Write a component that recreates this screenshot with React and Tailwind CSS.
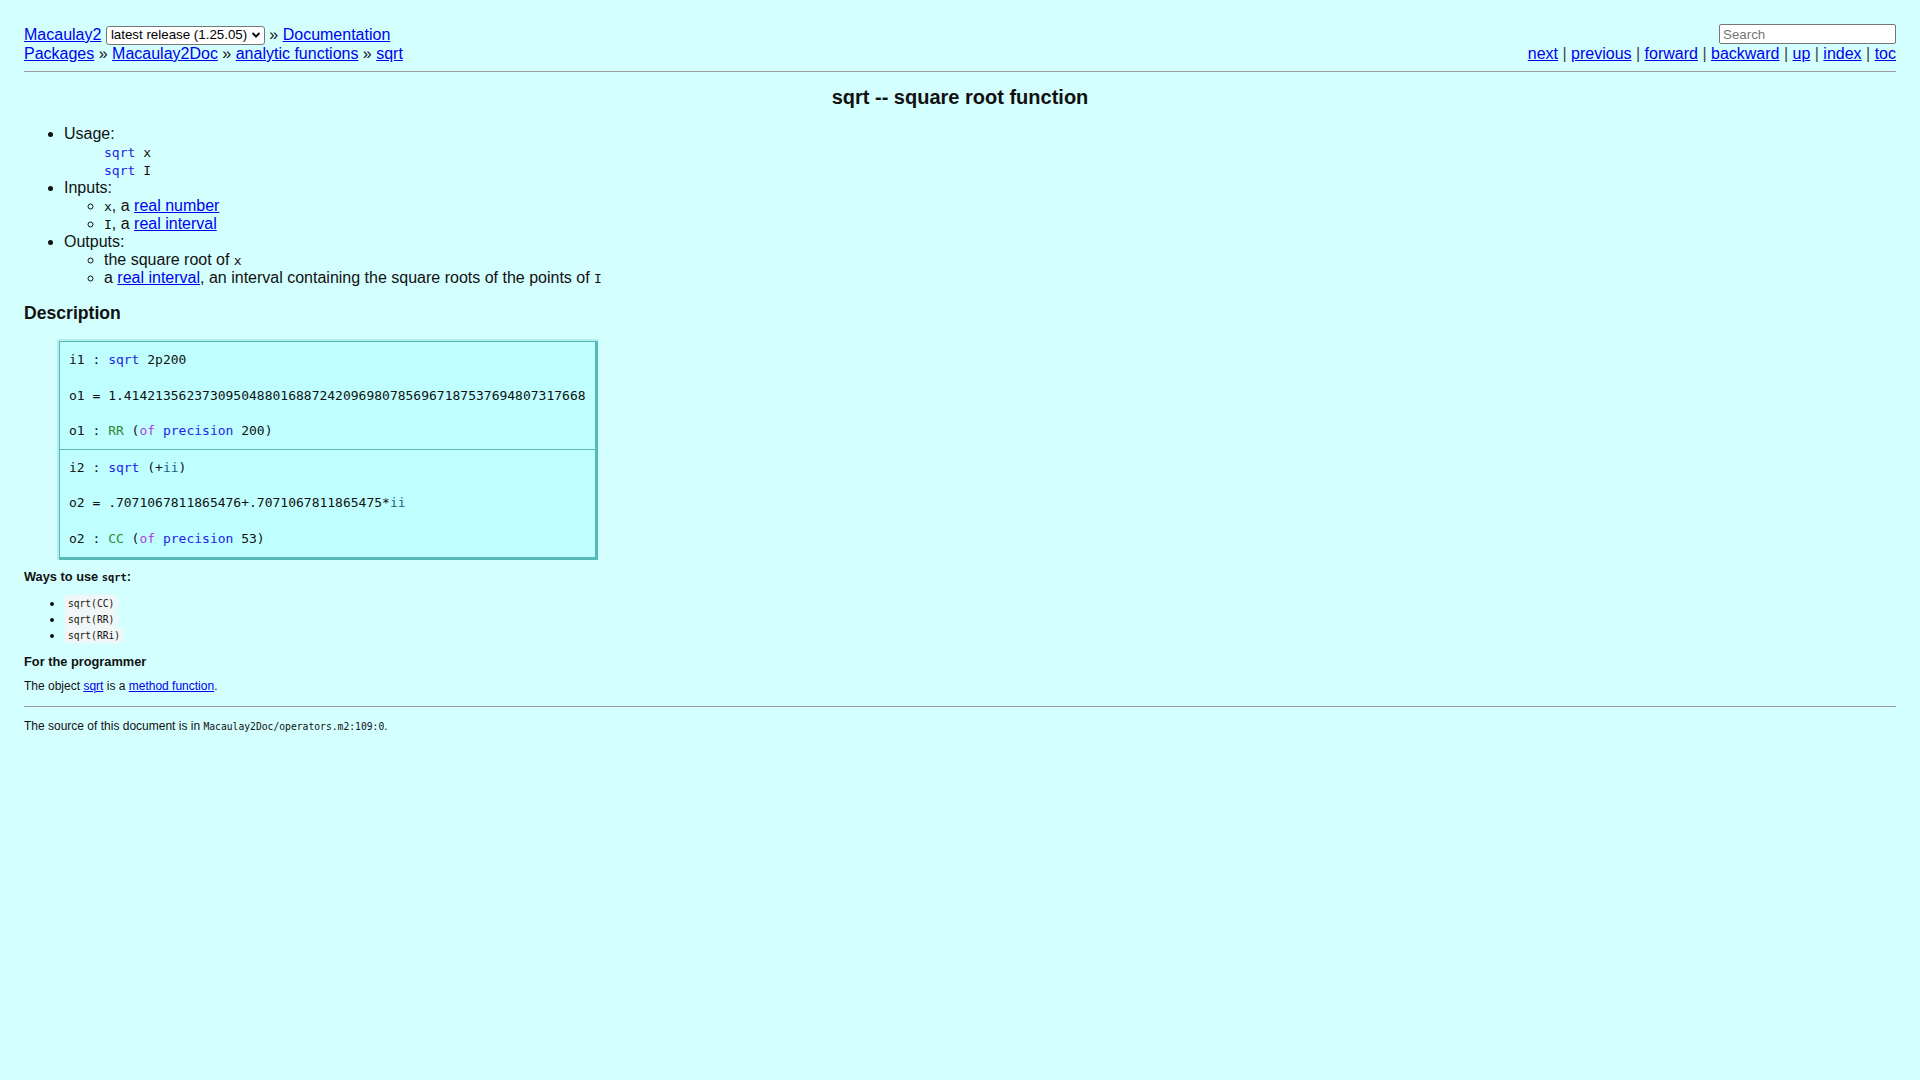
import React from 'react';

const SANS = "font-['Liberation_Sans',Arial,sans-serif]";
const MONO = "font-['DejaVu_Sans_Mono',monospace]";

const A = ({ children, className = '' }) => (
    <a href="#" className={`text-[#0000ee] underline ${className}`}>
        {children}
    </a>
);

const Blue = ({ children }) => <span className="text-[#2323e8]">{children}</span>;
const Green = ({ children }) => <span className="text-[#2f8a2f]">{children}</span>;
const Purple = ({ children }) => <span className="text-[#a83ee0]">{children}</span>;
const Teal = ({ children }) => <span className="text-[#1f5f86]">{children}</span>;

// inline code inside sans lines, kept from stretching the line box
const Tt = ({ children }) => <span className={`${MONO} text-[13px] leading-none`}>{children}</span>;

const Example = ({ lines, first }) => (
    <div className={`px-[9px] py-[9px] ${first ? '' : 'border-t border-[#5cb9b9]'}`}>
        <pre className={`${MONO} text-[13px] leading-[17.75px] text-[#111]`}>
            {lines.map((l, i) => (
                <React.Fragment key={i}>
                    {i > 0 && '\n\n'}
                    {l}
                </React.Fragment>
            ))}
        </pre>
    </div>
);

export default function App() {
    const nav = ['next', 'previous', 'forward', 'backward', 'up', 'index', 'toc'];

    return (
        <div className={`min-h-screen bg-[#d4ffff] ${SANS} text-[#111] px-6 pt-6 pb-10`}>
            {/* header */}
            <div className="flex justify-between">
                <div className="text-[16px] whitespace-pre">
                    <div className="mt-[1px] h-[20px] flex items-center">
                        <A>Macaulay2</A>
                        <span className="ml-[4.5px] inline-flex items-center h-[19px] w-[159px] border border-[#767676] rounded-[3px] bg-white pl-[4px] pr-[3px] text-[13.33px] text-black justify-between">
                            <span>latest release (1.25.05)</span>
                            <svg width="10" height="8" viewBox="0 0 10 8">
                                <path d="M1.5 2 L5 5.5 L8.5 2" fill="none" stroke="#111" strokeWidth="2" />
                            </svg>
                        </span>
                        <span>{' » '}</span>
                        <A>Documentation</A>
                    </div>
                    <div className="h-[18px] flex items-center">
                        <A>Packages</A>
                        <span>{' » '}</span>
                        <A>Macaulay2Doc</A>
                        <span>{' » '}</span>
                        <A>analytic functions</A>
                        <span>{' » '}</span>
                        <A>sqrt</A>
                    </div>
                </div>
                <div className="flex flex-col items-end text-[16px] whitespace-pre">
                    <input
                        type="text"
                        placeholder="Search"
                        className="h-[20px] w-[177px] border border-[#767676] rounded-[2px] bg-white px-[3px] text-[13.33px] placeholder:text-[#757575] outline-none"
                    />
                    <div className="h-[19px] flex items-center">
                        {nav.map((n, i) => (
                            <React.Fragment key={n}>
                                {i > 0 && <span className="text-[#444]">{' | '}</span>}
                                <A>{n}</A>
                            </React.Fragment>
                        ))}
                    </div>
                </div>
            </div>

            <div className="mt-[8px] h-px bg-[#9c9c9c]" />

            <h1 className="mt-[13.5px] text-center text-[20px] leading-[23px] font-bold">
                sqrt -- square root function
            </h1>

            {/* usage / inputs / outputs */}
            <ul className="mt-[16.5px] pl-10 list-disc text-[16px] leading-[18px]">
                <li>
                    Usage:
                    <div className={`pl-10 pt-[1px] -mb-[1px] ${MONO} text-[13px]`}>
                        <div><Blue>sqrt</Blue> x</div>
                        <div><Blue>sqrt</Blue> I</div>
                    </div>
                </li>
                <li>
                    Inputs:
                    <ul className="pl-10 list-[circle]">
                        <li>
                            <Tt>x</Tt>, a <A>real number</A>
                        </li>
                        <li>
                            <Tt>I</Tt>, a <A>real interval</A>
                        </li>
                    </ul>
                </li>
                <li>
                    Outputs:
                    <ul className="pl-10 list-[circle]">
                        <li>
                            the square root of <Tt>x</Tt>
                        </li>
                        <li>
                            a <A>real interval</A>, an interval containing the square roots of the points of <Tt>I</Tt>
                        </li>
                    </ul>
                </li>
            </ul>

            <h2 className="mt-[16px] text-[17.6px] leading-[20px] font-bold">Description</h2>

            {/* example box */}
            <div className="mt-[16px] ml-[33px] w-fit border-t-2 border-l-2 border-[#b4eeee]">
                <div className="bg-[#c0ffff] border-t border-l border-r-[3px] border-b-[3px] border-[#57b8b8]">
                    <Example
                        first
                        lines={[
                            <>i1 : <Blue>sqrt</Blue> 2p200</>,
                            <>o1 = 1.41421356237309504880168872420969807856967187537694807317668</>,
                            <>o1 : <Green>RR</Green> (<Purple>of</Purple> <Blue>precision</Blue> 200)</>,
                        ]}
                    />
                    <Example
                        lines={[
                            <>i2 : <Blue>sqrt</Blue> (+<Teal>ii</Teal>)</>,
                            <>o2 = .7071067811865476+.7071067811865475*<Teal>ii</Teal></>,
                            <>o2 : <Green>CC</Green> (<Purple>of</Purple> <Blue>precision</Blue> 53)</>,
                        ]}
                    />
                </div>
            </div>

            <h3 className="mt-[9px] text-[12.8px] leading-[15px] font-bold">
                Ways to use <code className={`${MONO} text-[10.4px] leading-none`}>sqrt</code>:
            </h3>
            <ul className="mt-[11px] pl-10 list-disc text-[12px] leading-[16px]">
                {['sqrt(CC)', 'sqrt(RR)', 'sqrt(RRi)'].map((w) => (
                    <li key={w}>
                        <code className={`${MONO} text-[9.6px] leading-none bg-[#f1f6f6] rounded-[5px] px-[4px] py-[2.5px]`}>{w}</code>
                    </li>
                ))}
            </ul>

            <h3 className="mt-[11.5px] text-[12.8px] leading-[15px] font-bold">For the programmer</h3>
            <p className="mt-[9.5px] text-[12px] leading-[14px]">
                The object <A>sqrt</A> is a <A>method function</A>.
            </p>

            <div className="mt-[13px] h-px bg-[#9c9c9c]" />

            <p className="mt-[12px] text-[12px] leading-[14px]">
                The source of this document is in{' '}
                <code className={`${MONO} text-[9.7px] leading-none`}>Macaulay2Doc/operators.m2:109:0</code>.
            </p>
        </div>
    );
}
